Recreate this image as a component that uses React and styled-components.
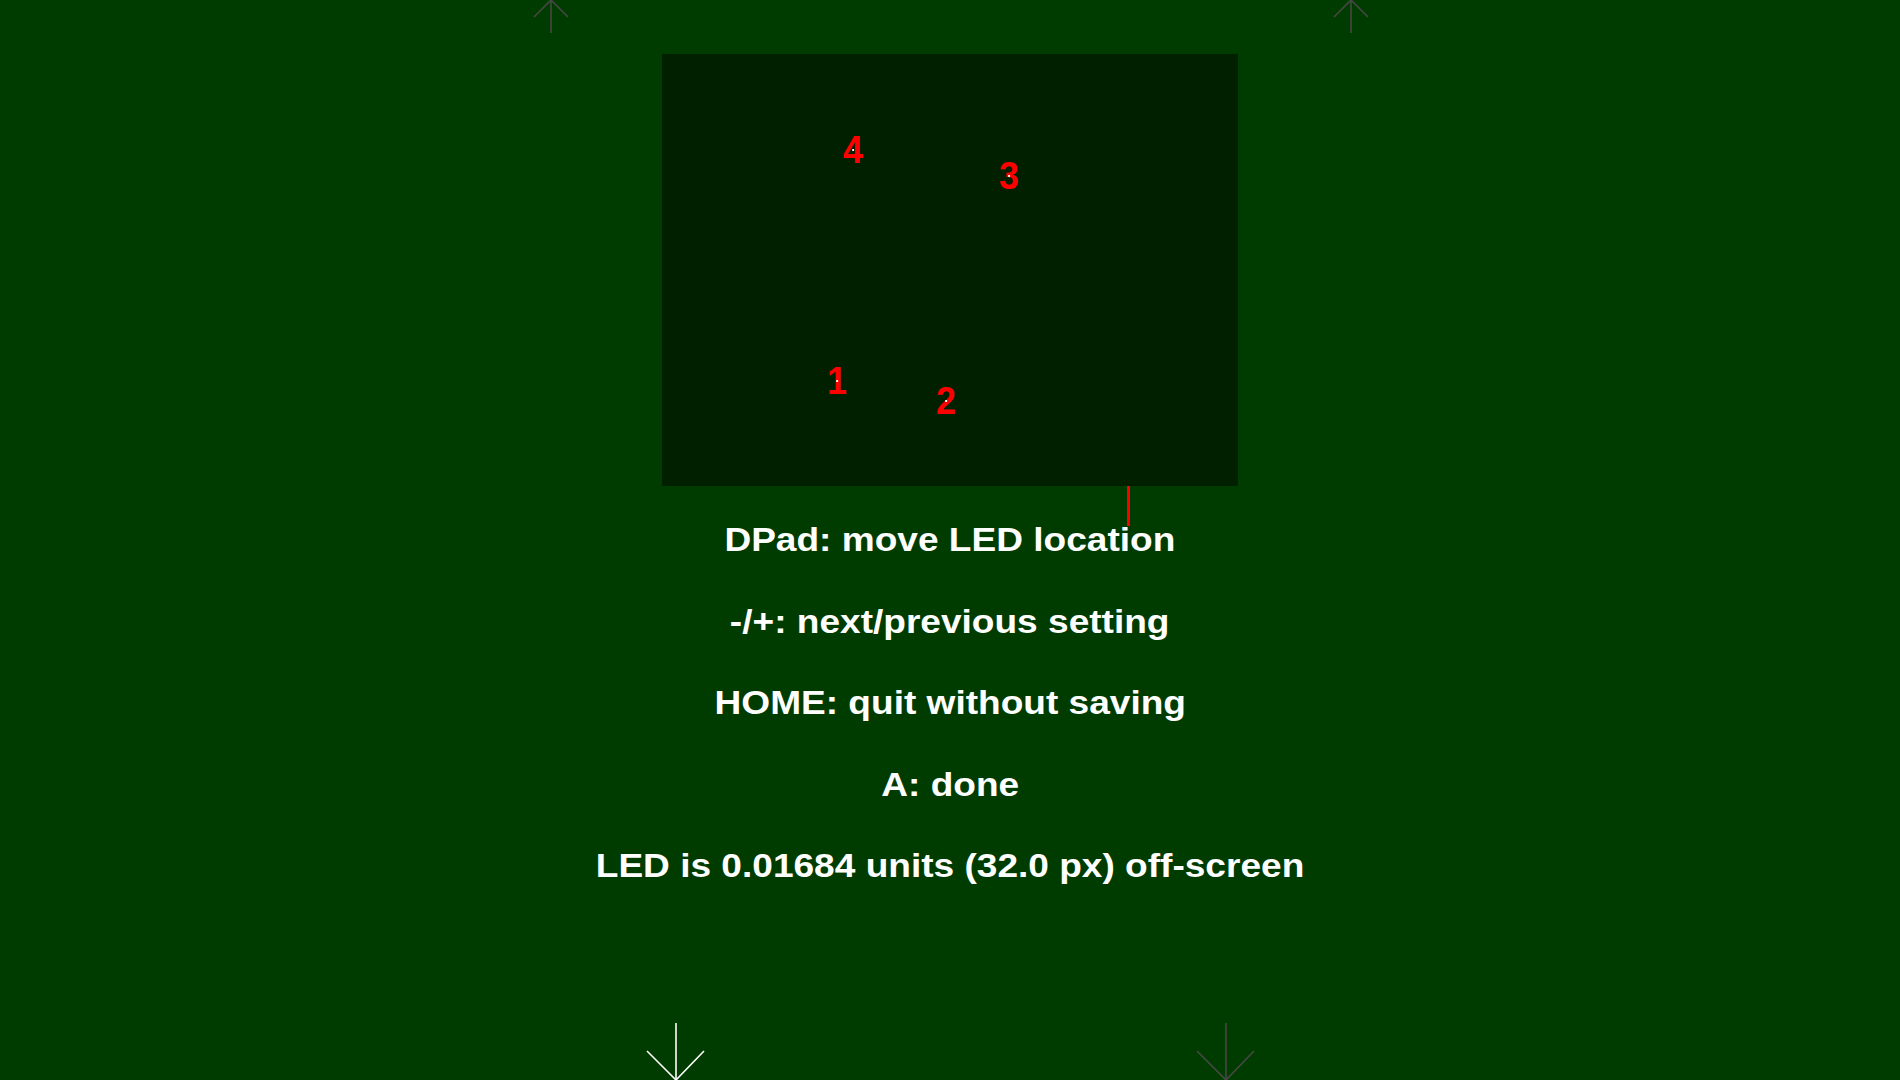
import React from "react";
import styled, { createGlobalStyle } from "styled-components";

const GlobalStyle = createGlobalStyle`
  html, body {
    margin: 0;
    padding: 0;
    background: #003c00;
  }
`;

const Screen = styled.div`
  position: relative;
  width: 1900px;
  height: 1080px;
  overflow: hidden;
  background: #003c00;
  display: flex;
  flex-direction: column;
  align-items: center;
  padding-top: 54px;
  box-sizing: border-box;
  font-family: "Liberation Sans", Arial, sans-serif;
`;

const Preview = styled.div`
  position: relative;
  width: 576px;
  height: 432px;
  background: #002000;
  flex-shrink: 0;
`;

// label drawn centred on the LED point; the point itself is the white dot
const LedLabel = styled.div`
  position: absolute;
  color: #ff0000;
  font-size: 39px;
  font-weight: bold;
  line-height: 28px;
  transform: translate(-50%, -50%) scaleX(0.92);
  white-space: nowrap;

  &::after {
    content: "";
    position: absolute;
    left: 50%;
    top: 50%;
    width: 2px;
    height: 2px;
    margin: -1px 0 0 -1px;
    background: #ffffff;
  }
`;

const Marker = styled.div`
  position: absolute;
  left: 465px;
  top: 432px;
  width: 3px;
  height: 40px;
  background: #ff0000;
  z-index: 2;
`;

const Help = styled.div`
  display: flex;
  flex-direction: column;
  align-items: center;
  margin-top: 13px;
`;

const HelpLine = styled.div`
  color: #ffffff;
  font-size: 34px;
  font-weight: bold;
  line-height: 81.5px;
  white-space: nowrap;
  transform: scaleX(1.09);
`;

const ArrowSvg = styled.svg`
  position: absolute;
  left: ${(p) => p.$x - 30}px;
  top: ${(p) => p.$y}px;
  width: 60px;
  height: 60px;
  overflow: visible;
`;

const Arrow = ({ x, y, down, color }) => (
  <ArrowSvg $x={x} $y={y} viewBox="0 0 60 60">
    {down ? (
      <g stroke={color} strokeWidth="1.6" fill="none">
        <line x1="30" y1="3" x2="30" y2="60" />
        <polyline points="1,31 30,60 58,31" />
      </g>
    ) : (
      <g stroke={color} strokeWidth="1.6" fill="none">
        <line x1="30" y1="0" x2="30" y2="33" />
        <polyline points="13,17 30,0 47,17" />
      </g>
    )}
  </ArrowSvg>
);

const leds = [
  { n: 4, x: 190.7, y: 95.7 },
  { n: 3, x: 346.7, y: 122.3 },
  { n: 1, x: 175, y: 327 },
  { n: 2, x: 284, y: 347 },
];

const lines = [
  "DPad: move LED location",
  "-/+: next/previous setting",
  "HOME: quit without saving",
  "A: done",
  "LED is 0.01684 units (32.0 px) off-screen",
];

const App = () => (
  <>
    <GlobalStyle />
    <Screen>
      <Arrow x={551} y={0} color="#474747" />
      <Arrow x={1351} y={0} color="#474747" />
      <Arrow x={676} y={1020} down color="#ffffff" />
      <Arrow x={1226} y={1020} down color="#474747" />
      <Preview>
        {leds.map((l) => (
          <LedLabel key={l.n} style={{ left: l.x, top: l.y }}>
            {l.n}
          </LedLabel>
        ))}
        <Marker />
      </Preview>
      <Help>
        {lines.map((t) => (
          <HelpLine key={t}>{t}</HelpLine>
        ))}
      </Help>
    </Screen>
  </>
);

export default App;
